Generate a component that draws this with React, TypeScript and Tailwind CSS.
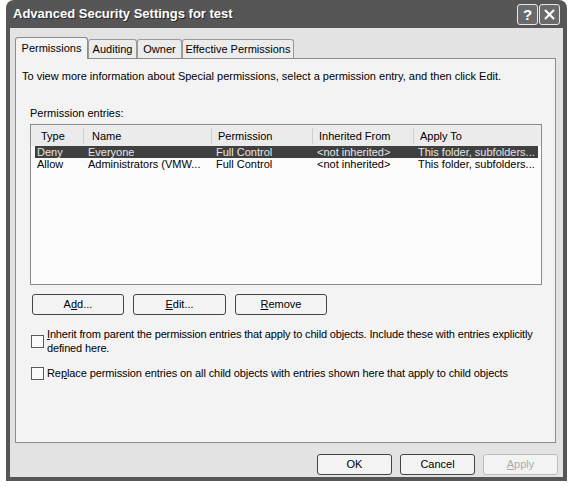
const rows = [
  {
    type: "Deny",
    name: "Everyone",
    perm: "Full Control",
    from: "<not inherited>",
    to: "This folder, subfolders...",
    selected: true,
  },
  {
    type: "Allow",
    name: "Administrators (VMW...",
    perm: "Full Control",
    from: "<not inherited>",
    to: "This folder, subfolders...",
    selected: false,
  },
];

const tabs = [
  { label: "Permissions", w: "w-[73px]", active: true },
  { label: "Auditing", w: "w-[49px]", active: false },
  { label: "Owner", w: "w-[45px]", active: false },
  { label: "Effective Permissions", w: "w-[112px]", active: false },
];

function XpButton({
  children,
  className = "",
  disabled = false,
}: {
  children: React.ReactNode;
  className?: string;
  disabled?: boolean;
}) {
  return (
    <button
      type="button"
      className={`flex h-[21px] items-center justify-center rounded-[3px] border bg-[#f3f3f3] leading-none ${
        disabled ? "border-[#bdbdbd] text-[#ababab]" : "border-[#444] text-black"
      } ${className}`}
    >
      {children}
    </button>
  );
}

function Checkbox() {
  return <span className="block h-[13px] w-[13px] shrink-0 border border-[#5a5a5a] bg-[#fbfbfb]" />;
}

export default function App() {
  return (
    <div className="h-[487px] w-[570px] bg-white font-['Liberation_Sans',Arial,sans-serif] text-[11px] text-black">
      <div className="ml-[6px] flex h-[481px] w-[561px] flex-col rounded-t-[8px] bg-[#565656]">
        {/* title bar */}
        <div className="flex h-[28px] shrink-0 items-center pl-[7px] pr-[7px]">
          <span className="flex-1 text-[13px] font-bold text-white [text-shadow:1px_1px_0_#2a2a2a]">
            Advanced Security Settings for test
          </span>
          <div className="flex gap-[1px]">
            <span className="flex h-[21px] w-[21px] items-center justify-center rounded-[3px] border border-[#e8e8e8] bg-[#6a6a6a] text-[15px] font-bold leading-none text-white">
              ?
            </span>
            <span className="flex h-[21px] w-[21px] items-center justify-center rounded-[3px] border border-[#e8e8e8] bg-[#6a6a6a]">
              <svg width="11" height="11" viewBox="0 0 11 11">
                <path d="M1 1 L10 10 M10 1 L1 10" stroke="white" strokeWidth="2.2" />
              </svg>
            </span>
          </div>
        </div>

        {/* client area */}
        <div className="mx-[4px] mb-[4px] flex flex-1 flex-col bg-[#e3e3e3] pt-[9px]">
          <div className="flex h-[21px] items-end pl-[5px]">
            {tabs.map((t) => (
              <div
                key={t.label}
                className={`${t.w} flex items-center justify-center rounded-t-[3px] border border-b-0 ${
                  t.active
                    ? "relative z-10 -mb-[1px] h-[22px] border-[#8c8c8c] bg-[#f3f3f3]"
                    : "h-[19px] border-[#9a9a9a] bg-[#ececec]"
                }`}
              >
                {t.label}
              </div>
            ))}
          </div>

          <div className="ml-[5px] mr-[7px] flex h-[385px] flex-col border border-[#8c8c8c] bg-[#f3f3f3] pt-[11px]">
            <p className="pl-[6px] leading-[13px]">
              To view more information about Special permissions, select a permission entry, and then click Edit.
            </p>
            <p className="mt-[24px] pl-[14px] leading-[13px]">Permission entries:</p>

            <div className="ml-[14px] mr-[13px] mt-[4px] h-[161px] border border-[#8c8c8c] bg-[#fcfcfc]">
              <div className="flex h-[21px] items-center bg-[#ebebeb] pt-[1px]">
                <span className="w-[53px] border-r border-[#d0d0d0] pl-[10px]">Type</span>
                <span className="w-[128px] border-r border-[#d0d0d0] pl-[8px]">Name</span>
                <span className="w-[101px] border-r border-[#d0d0d0] pl-[6px]">Permission</span>
                <span className="w-[101px] border-r border-[#d0d0d0] pl-[6px]">Inherited From</span>
                <span className="flex-1 pl-[6px]">Apply To</span>
              </div>
              {rows.map((r) => (
                <div
                  key={r.type}
                  className={`ml-[4px] mr-[3px] flex h-[12px] items-center leading-[12px] ${
                    r.selected ? "bg-[#404040] text-[#e6e6e6]" : "text-black"
                  }`}
                >
                  <span className="w-[49px] pl-[2px]">{r.type}</span>
                  <span className="w-[128px] pl-[4px]">{r.name}</span>
                  <span className="w-[101px] pl-[4px]">{r.perm}</span>
                  <span className="w-[101px] pl-[4px]">{r.from}</span>
                  <span className="flex-1 pl-[4px]">{r.to}</span>
                </div>
              ))}
            </div>

            <div className="mt-[9px] flex gap-[9px] pl-[16px]">
              <XpButton className="w-[92px]">
                A<span className="underline">d</span>d...
              </XpButton>
              <XpButton className="w-[93px]">
                <span className="underline">E</span>dit...
              </XpButton>
              <XpButton className="w-[92px]">
                <span className="underline">R</span>emove
              </XpButton>
            </div>

            <div className="mt-[12px] flex items-center gap-[3px] pl-[15px] pr-[6px]">
              <Checkbox />
              <p className="leading-[14px] tracking-[-0.15px] underline-offset-1">
                <span className="underline">I</span>nherit from parent the permission entries that apply to child
                objects. Include these with entries explicitly defined here.
              </p>
            </div>

            <div className="mt-[11px] flex items-center gap-[3px] pl-[15px]">
              <Checkbox />
              <p className="leading-[14px] tracking-[-0.1px]">
                Re<span className="underline">p</span>lace permission entries on all child objects with entries shown
                here that apply to child objects
              </p>
            </div>
          </div>

          <div className="mt-[11px] flex justify-end gap-[8px] pr-[5px]">
            <XpButton className="w-[75px]">OK</XpButton>
            <XpButton className="w-[75px]">Cancel</XpButton>
            <XpButton className="w-[75px]" disabled>
              <span className="underline">A</span>pply
            </XpButton>
          </div>
        </div>
      </div>
    </div>
  );
}
